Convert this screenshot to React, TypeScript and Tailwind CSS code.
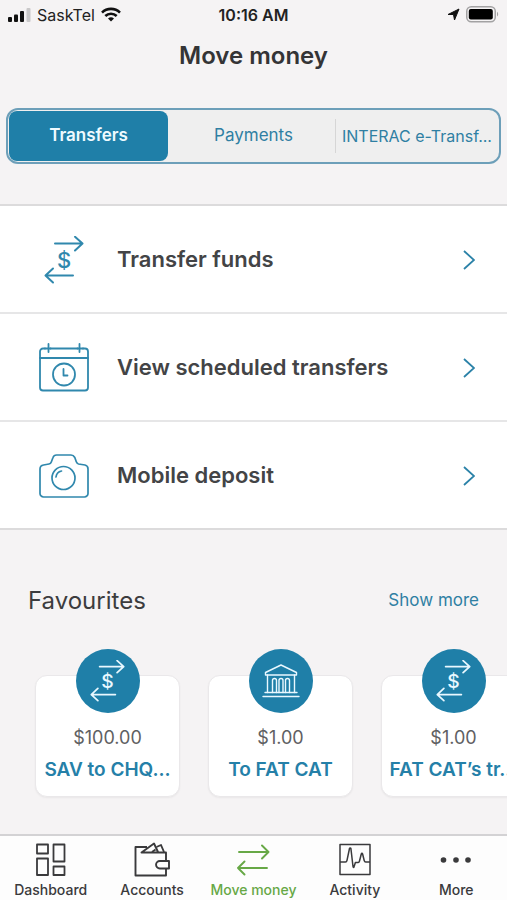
import React from 'react';

type IconProps = { className?: string };

const SignalIcon: React.FC = () => (
  <svg width="23" height="14" viewBox="0 0 23 14" aria-hidden="true">
    <rect x="0" y="9" width="4" height="5" rx="1" fill="#111" />
    <rect x="6" y="6.5" width="4" height="7.500" rx="1" fill="#111" />
    <rect x="12" y="3" width="4" height="11" rx="1" fill="#111" />
    <rect x="18.500" y="0" width="4" height="14" rx="1" fill="#c9c8c9" />
  </svg>
);

const WifiIcon: React.FC = () => (
  <svg width="20" height="15" viewBox="0 0 20 15" fill="none" stroke="#111" strokeWidth="2.600" aria-hidden="true">
    <path d="M1 5.600a12.800 12.800 0 0 1 18 0" />
    <path d="M4.300 9a8.200 8.200 0 0 1 11.400 0" />
    <path d="M10 14.600 7 11.600a4.300 4.300 0 0 1 6 0z" fill="#111" stroke="none" />
  </svg>
);

const LocationIcon: React.FC = () => (
  <svg width="13" height="13" viewBox="0 0 13 13" aria-hidden="true">
    <path d="M12 1 7.500 12 6.500 6.500 1 6.500z" fill="#111" stroke="#111" strokeLinejoin="round" />
  </svg>
);

const BatteryIcon: React.FC = () => (
  <svg width="33" height="17" viewBox="0 0 33 17" aria-hidden="true">
    <rect x="0.750" y="0.750" width="28.500" height="15" rx="4.500" fill="none" stroke="#a3a2a3" strokeWidth="1.500" />
    <rect x="2.800" y="3" width="24" height="10.600" rx="2" fill="#000" />
    <path d="M31 5.800c1.600.8 1.600 4 0 4.800z" fill="#a3a2a3" />
  </svg>
);

const TransferIcon: React.FC<IconProps> = ({ className }) => (
  <svg className={className} viewBox="0 0 40 48" fill="none" stroke="currentColor" strokeWidth="2" strokeLinecap="round" strokeLinejoin="round" aria-hidden="true">
    <path d="M11 7.500h27M31 0.800l7.500 6.700-7.500 7" />
    <path d="M29 39.500H2M9 32.500l-7.500 7 7.500 7" />
    <text x="20" y="31.500" textAnchor="middle" fontSize="22" fontWeight="500" fill="currentColor" stroke="none">$</text>
  </svg>
);

const CalendarIcon: React.FC<IconProps> = ({ className }) => (
  <svg className={className} viewBox="0 0 50 50" fill="none" stroke="currentColor" strokeWidth="1.800" strokeLinecap="round" strokeLinejoin="round" aria-hidden="true">
    <path d="M6 5.500H4a3 3 0 0 0-3 3v36a3 3 0 0 0 3 3h42a3 3 0 0 0 3-3v-36a3 3 0 0 0-3-3h-2M11.500 5.500h27" />
    <path d="M6 5.500h5.500M38.500 5.500H44M1 15h48M9.500 1v8M40.500 1v8" />
    <circle cx="25" cy="31.500" r="11" />
    <path d="M24.500 26v6.500h4" />
  </svg>
);

const CameraIcon: React.FC<IconProps> = ({ className }) => (
  <svg className={className} viewBox="0 0 50 50" fill="none" stroke="currentColor" strokeWidth="1.700" strokeLinecap="round" strokeLinejoin="round" aria-hidden="true">
    <path d="M1 21v21.500a3.500 3.500 0 0 0 3.500 3.500h41a3.500 3.500 0 0 0 3.500-3.500V18a4 4 0 0 0-3-4l-6.500-1c-1.300-.3-1.800-1-2.200-2.200l-1.500-4.300C35 5 34 4 32 4H17.500c-2 0-3 1-3.500 2.500l-1.700 4.500c-.4 1.200-1 1.800-2.300 2L4.500 14C2.300 14.400 1 15.800 1 18z" />
    <circle cx="24.500" cy="27" r="11.500" />
    <path d="M17 26a7 7 0 0 1 5.500-6" />
  </svg>
);

const BankIcon: React.FC<IconProps> = ({ className }) => (
  <svg className={className} viewBox="0 0 38 34" fill="none" stroke="currentColor" strokeWidth="1.400" strokeLinecap="round" strokeLinejoin="round" aria-hidden="true">
    <path d="M19 1 3.500 8.500v2.500h31V8.500zM1 32.500h36M3 28.500h32" />
    <path d="M5.500 11v17.500M32.500 11v17.500" />
    <path d="M10.500 28.500V16.500a2 2 0 0 1 4 0v12M17 28.500V16.500a2 2 0 0 1 4 0v12M23.500 28.500V16.500a2 2 0 0 1 4 0v12" />
  </svg>
);

const ChevronIcon: React.FC = () => (
  <svg width="12" height="20" viewBox="0 0 12 20" fill="none" stroke="#2b82a8" strokeWidth="1.800" aria-hidden="true">
    <path d="M1 1l10 9-10 9" />
  </svg>
);

const DashboardIcon: React.FC<IconProps> = ({ className }) => (
  <svg className={className} viewBox="0 0 36 36" fill="none" stroke="currentColor" strokeWidth="1.800" strokeLinejoin="round" aria-hidden="true">
    <rect x="4" y="2.500" width="11" height="9" />
    <rect x="20.500" y="2.500" width="11" height="17" />
    <rect x="4" y="16.500" width="11" height="16.500" />
    <rect x="20.500" y="24.500" width="11" height="8.500" />
  </svg>
);

const WalletIcon: React.FC<IconProps> = ({ className }) => (
  <svg className={className} viewBox="0 0 36 36" fill="none" stroke="currentColor" strokeWidth="1.900" strokeLinejoin="round" aria-hidden="true">
    <path d="M13 5H1.500v28.500H32v-7M32 19v-8.500H7.500L20 1.500l4 8.500" />
    <path d="M22.500 5l4.500-2 3 7M18 10l3.500-2.500" />
    <path d="M35 19v7.500h-9.200a3.750 3.750 0 0 1 0-7.500z" />
  </svg>
);

const MoveIcon: React.FC<IconProps> = ({ className }) => (
  <svg className={className} viewBox="0 0 36 36" fill="none" stroke="currentColor" strokeWidth="1.900" strokeLinecap="round" strokeLinejoin="round" aria-hidden="true">
    <path d="M4 10h29M27 3.500 33.500 10 27 16.500M32 26H3M9.500 19.500 3 26l6.500 6.500" />
  </svg>
);

const ActivityIcon: React.FC<IconProps> = ({ className }) => (
  <svg className={className} viewBox="0 0 36 36" fill="none" stroke="currentColor" strokeWidth="1.500" strokeLinejoin="round" aria-hidden="true">
    <rect x="3" y="2.500" width="30" height="30" />
    <path d="M3 20h5.500c1 0 1.300-.7 1.500-1.700L12.500 6.500c.2-.8 1.200-.8 1.400 0L16 24.500c.2 1.300.8 1.300 1.100 0l1.300-4h2.800c.9 0 1.100-.7 1.300-1.500l1.800-7c.3-1 1-1 1.300 0l1.600 6.500c.3 1.200.6 1.500 1.500 1.500H33" />
  </svg>
);

const MoreIcon: React.FC<IconProps> = ({ className }) => (
  <svg className={className} viewBox="0 0 36 36" fill="currentColor" aria-hidden="true">
    <circle cx="5.500" cy="18" r="2.800" />
    <circle cx="18" cy="18" r="2.800" />
    <circle cx="30" cy="18" r="2.800" />
  </svg>
);

const actions = [
  { label: 'Transfer funds', icon: <TransferIcon className="h-12 w-10" /> },
  { label: 'View scheduled transfers', icon: <CalendarIcon className="size-[50px]" /> },
  { label: 'Mobile deposit', icon: <CameraIcon className="size-[50px]" /> },
];

const favourites = [
  { amount: '$100.00', name: 'SAV to CHQ...', icon: <TransferIcon className="h-[42px] w-[35px]" /> },
  { amount: '$1.00', name: 'To FAT CAT', icon: <BankIcon className="h-[34px] w-[38px]" /> },
  { amount: '$1.00', name: 'FAT CAT’s tr...', icon: <TransferIcon className="h-[42px] w-[35px]" /> },
];

const tabs = [
  { label: 'Dashboard', icon: <DashboardIcon className="size-9" /> },
  { label: 'Accounts', icon: <WalletIcon className="size-9" /> },
  { label: 'Move money', icon: <MoveIcon className="size-9" />, active: true },
  { label: 'Activity', icon: <ActivityIcon className="size-9" /> },
  { label: 'More', icon: <MoreIcon className="size-9" /> },
];

const App: React.FC = () => {
  return (
    <div className="flex min-h-screen flex-col overflow-hidden bg-[#f5f3f4] font-['Inter','Liberation_Sans',sans-serif] text-[#434446]">
      {/* Status bar */}
      <div className="grid h-7 grid-cols-3 items-center px-2 pt-px text-base text-[#222]">
        <div className="flex items-center gap-1.5">
          <SignalIcon />
          <span>SaskTel</span>
          <WifiIcon />
        </div>
        <div className="text-center font-semibold">10:16 AM</div>
        <div className="flex items-center justify-end gap-1.5">
          <LocationIcon />
          <BatteryIcon />
        </div>
      </div>

      <header className="pt-3 text-center">
        <h1 className="text-2xl font-semibold text-[#343436]">Move money</h1>
      </header>

      {/* Segmented control */}
      <div className="mx-1.5 mt-9 grid grid-cols-3 rounded-xl border-2 border-[#6d9fb9] bg-[#efefef] p-px text-[17px] text-[#2f7fa3]">
        <button className="mr-1 h-[50px] rounded-lg bg-[#1f7fa8] font-semibold text-[#eefaff]">Transfers</button>
        <button className="h-[50px]">Payments</button>
        <button className="my-2 border-l border-[#d6d6d6] text-base whitespace-nowrap">INTERAC e-Transf...</button>
      </div>

      {/* Actions */}
      <ul className="mt-10 divide-y-2 divide-[#e6e6e7] border-y-2 border-[#dcdbdc] bg-white">
        {actions.map((action) => (
          <li key={action.label}>
            <button className="flex h-[106px] w-full items-center pt-px pr-8 pl-[39px] text-left text-[22px] font-semibold">
              <span className="flex w-[50px] justify-center text-[#3088ad]">{action.icon}</span>
              <span className="ml-7 flex-1">{action.label}</span>
              <ChevronIcon />
            </button>
          </li>
        ))}
      </ul>

      {/* Favourites */}
      <section className="pt-[55px]">
        <div className="flex items-center justify-between px-7">
          <h2 className="text-2xl text-[#3c3c3e]">Favourites</h2>
          <a href="#favourites" className="text-[17px] text-[#2f7fa3]">Show more</a>
        </div>
        <div className="mt-8 flex gap-7 pl-[35px]">
          {favourites.map((item, i) => (
            <button key={i} className="flex w-[145px] shrink-0 flex-col items-center">
              <span className="z-10 -mb-[38px] flex size-16 items-center justify-center rounded-full bg-[#1f7fa8] text-[#e9f8ff]">
                {item.icon}
              </span>
              <span className="flex w-full flex-col items-center rounded-xl border border-[#eae8ea] bg-white pt-12 pb-3 shadow-xs">
                <span className="text-lg text-[#606062]">{item.amount}</span>
                <span className="mt-1 text-[19px] leading-7 font-semibold whitespace-nowrap text-[#2580a8]">{item.name}</span>
              </span>
            </button>
          ))}
        </div>
      </section>

      {/* Tab bar */}
      <nav className="mt-auto grid grid-cols-5 border-t-2 border-[#d3d2d4] bg-[#fdfdfd] pt-1.5">
        {tabs.map((tab) => (
          <a
            key={tab.label}
            href="#tab"
            className={`flex flex-col items-center gap-0.5 text-sm font-medium whitespace-nowrap ${tab.active ? 'text-[#67a846]' : 'text-[#3a3a3c]'}`}
          >
            {tab.icon}
            <span>{tab.label}</span>
          </a>
        ))}
      </nav>
    </div>
  );
};

export default App;
